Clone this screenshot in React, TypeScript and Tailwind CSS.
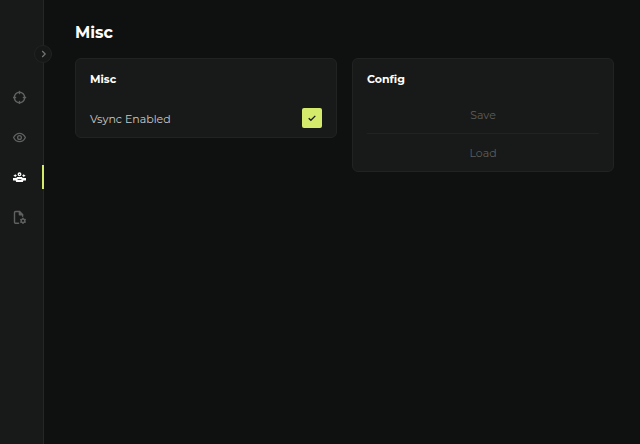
import clsx from "clsx";
import { FC, ReactNode, useState } from "react";

interface IconProps {
    className?: string
}

const AimIcon: FC<IconProps> = ({ className }) => (
    <svg className={className} viewBox="0 0 14 14" fill="none" stroke="currentColor" strokeWidth="1.4" strokeLinecap="round">
        <circle cx="6.5" cy="7.5" r="5.2" />
        <path d="M6.5 1.4v2.2M6.5 11.400v2.200M.4 7.500h2.200M10.400 7.500h2.200" />
    </svg>
)

const EyeIcon: FC<IconProps> = ({ className }) => (
    <svg className={className} viewBox="0 0 14 14" fill="none" stroke="currentColor" strokeWidth="1.3" strokeLinejoin="round">
        <path d="M.6 7.500C2 4.700 4.100 3.300 6.500 3.300S11 4.700 12.400 7.500C11 10.300 8.900 11.700 6.500 11.700S2 10.300.6 7.500Z" />
        <circle cx="6.500" cy="7.500" r="1.900" />
    </svg>
)

const MiscIcon: FC<IconProps> = ({ className }) => (
    <svg className={className} viewBox="0 0 14 14" fill="currentColor">
        <circle cx="6.500" cy="4.300" r="1.300" fill="none" stroke="currentColor" strokeWidth="1.300" />
        <path d="M2.200 3.900l.6 1.200 1.300.6-1.300.6-.6 1.200-.6-1.200-1.300-.6 1.300-.6zM10.800 3.900l.6 1.200 1.300.6-1.300.6-.6 1.200-.6-1.200-1.300-.6 1.300-.6z" />
        <path d="M0 8h3.400l.6-.9h5l.6.9H13v2.400h-2.600l-.6 1.700H3.200l-.6-1.700H0zM4.600 9v.7h3.800V9z" fillRule="evenodd" />
    </svg>
)

const FileCogIcon: FC<IconProps> = ({ className }) => (
    <svg className={className} viewBox="0 0 14 14" fill="none" stroke="currentColor" strokeWidth="1.400" strokeLinecap="round" strokeLinejoin="round">
        <path d="M5.600 13.300H2.700a1.200 1.200 0 0 1-1.200-1.200V2.700A1.200 1.200 0 0 1 2.700 1.500h3.700l3.200 3.200v1.600" />
        <path d="M6.400 1.500v3.200h3.200z" fill="currentColor" />
        <circle cx="10" cy="10.800" r="1.800" />
        <path d="M10 8.200v.6M10 12.800v.6M7.760 9.500l.5.300M11.740 11.800l.5.300M7.760 12.100l.5-.3M11.740 9.800l.5-.3" />
    </svg>
)

const tabs = [
    { name: "Aim", Icon: AimIcon },
    { name: "Visuals", Icon: EyeIcon },
    { name: "Misc", Icon: MiscIcon },
    { name: "Config", Icon: FileCogIcon },
]

const Card: FC<{ title: string, children: ReactNode }> = ({ title, children }) => (
    <section className="rounded-md border border-[#202322] bg-[#181a19] px-3.5">
        <h2 className="flex h-10 items-center text-[11px] font-bold text-white">{title}</h2>
        {children}
    </section>
)

const App: FC = () => {
    const [active, setActive] = useState("Misc")
    const [vsync, setVsync] = useState(true)

    return (
        <div className="flex min-h-screen bg-[#0f1110] font-['Montserrat','Inter',sans-serif] text-[#c9cac9]">
            <aside className="relative w-11 shrink-0 border-r border-[#242726] bg-[#181a19]">
                <button aria-label="Expand sidebar" className="absolute top-[45px] -right-[9px] flex size-[18px] items-center justify-center rounded-full border border-[#202322] bg-[#161817] text-[#747675]">
                    <svg className="size-2" viewBox="0 0 8 8" fill="none" stroke="currentColor" strokeWidth="1.200">
                        <path d="M3.200 1l3 3-3 3" />
                    </svg>
                </button>
                <nav className="-mr-px flex flex-col gap-4 pt-[85px]">
                    {tabs.map(({ name, Icon }) => (
                        <button key={name} aria-label={name} onClick={() => setActive(name)} className={clsx("flex h-6 items-center border-r-2 pl-[13px]", active === name ? "border-[#d3ea6b] text-white" : "border-transparent text-[#5f6160]")}>
                            <Icon className="size-3.5" />
                        </button>
                    ))}
                </nav>
            </aside>
            <main className="flex-1 pt-[21px] pr-[26px] pl-[31px]">
                <h1 className="text-base leading-6 font-bold text-white">{active}</h1>
                <div className="mt-[13px] grid grid-cols-2 items-start gap-[15px]">
                    <Card title="Misc">
                        <div className="flex h-[38px] items-center justify-between text-[11px]">
                            <label htmlFor="vsync" className="pt-0.5">Vsync Enabled</label>
                            <span className="grid size-5">
                                <input id="vsync" type="checkbox" checked={vsync} onChange={() => setVsync(!vsync)} className="col-start-1 row-start-1 size-5 appearance-none rounded-xs bg-[#242726] checked:bg-[#d3ea6b]" />
                                {vsync && (
                                    <svg className="pointer-events-none col-start-1 row-start-1 size-2 place-self-center" viewBox="0 0 8 8" fill="none" stroke="#181a19" strokeWidth="1.300">
                                        <path d="M.7 4.200l2.200 2.100L7.300 1.900" />
                                    </svg>
                                )}
                            </span>
                        </div>
                    </Card>
                    <Card title="Config">
                        <div className="flex flex-col divide-y divide-[#202322] text-[11px] text-[#5c5e5d]">
                            <button className="h-[35px] pb-0.5">Save</button>
                            <button className="h-[37px] pt-0.5">Load</button>
                        </div>
                    </Card>
                </div>
            </main>
        </div>
    )
}

export default App;
